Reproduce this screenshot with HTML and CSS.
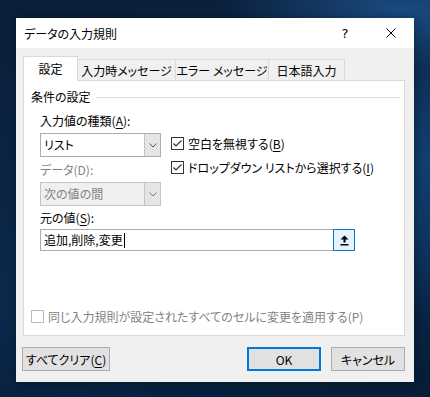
FILE: index.html
```html
<!DOCTYPE html>
<html lang="ja">

<head>
    <meta charset="UTF-8">
    <meta name="viewport" content="width=device-width, initial-scale=1.0">
    <title>データの入力規則</title>
    <link rel="stylesheet" href="styles.css">
</head>

<body>
    <div class="desktop">
        <div class="dialog">
            <div class="titlebar">
                <span class="title">データの入力規則</span>
                <span class="caption-btn">?</span>
                <span class="caption-btn">
                    <svg width="10" height="10" viewBox="0 0 10 10">
                        <path d="M0.5 0.5 L9.5 9.5 M9.5 0.5 L0.5 9.5" stroke="#000" stroke-width="1" fill="none" />
                    </svg>
                </span>
            </div>

            <div class="dialog-body">
                <div class="tabs">
                    <div class="tab active">設定</div>
                    <div class="tab tab-input">入力時メッセージ</div>
                    <div class="tab tab-error">エラー メッセージ</div>
                    <div class="tab tab-ime">日本語入力</div>
                </div>

                <div class="panel">
                    <div class="group-title"><span>条件の設定</span></div>

                    <div class="field-label first">入力値の種類(<u>A</u>):</div>

                    <div class="criteria">
                        <div class="criteria-left">
                            <div class="combo">
                                <span class="combo-text">リスト</span>
                                <span class="combo-btn">
                                    <svg width="8" height="5" viewBox="0 0 8 5">
                                        <path d="M0.5 0.5 L4 4 L7.5 0.5" stroke="#555" stroke-width="1" fill="none" />
                                    </svg>
                                </span>
                            </div>
                            <div class="field-label disabled">データ(D):</div>
                            <div class="combo disabled">
                                <span class="combo-text">次の値の間</span>
                                <span class="combo-btn">
                                    <svg width="8" height="5" viewBox="0 0 8 5">
                                        <path d="M0.5 0.5 L4 4 L7.5 0.5" stroke="#777" stroke-width="1" fill="none" />
                                    </svg>
                                </span>
                            </div>
                        </div>

                        <div class="checks">
                            <div class="check">
                                <span class="box">
                                    <svg width="11" height="11" viewBox="0 0 11 11">
                                        <path d="M1.5 5.5 L4 8 L9.5 2.5" stroke="#333" stroke-width="1.2" fill="none" />
                                    </svg>
                                </span>
                                <span>空白を無視する(<u>B</u>)</span>
                            </div>
                            <div class="check">
                                <span class="box">
                                    <svg width="11" height="11" viewBox="0 0 11 11">
                                        <path d="M1.5 5.5 L4 8 L9.5 2.5" stroke="#333" stroke-width="1.2" fill="none" />
                                    </svg>
                                </span>
                                <span>ドロップダウン リストから選択する(<u>I</u>)</span>
                            </div>
                        </div>
                    </div>

                    <div class="field-label source">元の値(<u>S</u>):</div>
                    <div class="ref-input">
                        <span class="ref-text">追加,削除,変更<span class="caret"></span></span>
                        <span class="ref-btn">
                            <svg width="9" height="11" viewBox="0 0 9 11">
                                <path d="M4.5 0.5 L0.5 4.5 L8.5 4.5 Z" fill="#000" />
                                <rect x="3.5" y="4" width="2" height="3.5" fill="#000" />
                                <rect x="0.5" y="9" width="8" height="1.5" fill="#000" />
                            </svg>
                        </span>
                    </div>

                    <div class="check apply disabled">
                        <span class="box"></span>
                        <span>同じ入力規則が設定されたすべてのセルに変更を適用する(P)</span>
                    </div>
                </div>

                <div class="buttons">
                    <button class="btn btn-clear">すべてクリア(<u>C</u>)</button>
                    <span class="spacer"></span>
                    <button class="btn btn-default">OK</button>
                    <button class="btn">キャンセル</button>
                </div>
            </div>
        </div>
    </div>
</body>

</html>
```

FILE: styles.css
```css
* {
    box-sizing: border-box;
}

body {
    margin: 0;
    font-family: "Noto Sans CJK JP", "Noto Sans", sans-serif;
    font-size: 12px;
    font-feature-settings: "palt";
    color: #000;
}

u {
    text-decoration-thickness: 1px;
    text-underline-offset: 2px;
}

.desktop {
    width: 430px;
    height: 397px;
    padding: 18px 16px 0 16px;
    overflow: hidden;
    background:
        radial-gradient(ellipse 180px 60px at 400px 10px, rgba(40, 110, 185, 0.55), transparent),
        radial-gradient(ellipse 40px 160px at 425px 160px, rgba(20, 80, 140, 0.6), transparent),
        linear-gradient(170deg, #0a1f3b 0%, #0b2646 45%, #0a2a4e 65%, #071c37 100%);
}

.dialog {
    width: 398px;
    height: 364px;
    background: #f0f0f0;
    box-shadow: 0 0 10px rgba(0, 0, 0, 0.35);
    display: flex;
    flex-direction: column;
}

.titlebar {
    height: 30px;
    background: #fff;
    display: flex;
    align-items: center;
}

.title {
    flex: 1;
    padding-left: 8px;
}

.caption-btn {
    width: 46px;
    height: 30px;
    display: flex;
    align-items: center;
    justify-content: center;
    font-family: "DejaVu Sans", sans-serif;
    font-size: 13px;
}

.dialog-body {
    padding: 8px 9px 0 7px;
}

.tabs {
    display: flex;
    align-items: flex-end;
    height: 24px;
    position: relative;
    z-index: 1;
}

.tab {
    height: 21px;
    display: flex;
    align-items: center;
    justify-content: center;
    border: 1px solid #d9d9d9;
    border-left: none;
    border-bottom: none;
    background: #f0f0f0;
}

.tab.active {
    width: 55px;
    height: 25px;
    margin-bottom: -1px;
    border-left: 1px solid #d9d9d9;
    background: #fff;
    padding-bottom: 1px;
}

.tab-input {
    width: 98px;
}

.tab-error {
    width: 93px;
}

.tab-ime {
    width: 76px;
}

.panel {
    width: 382px;
    height: 256px;
    background: #fff;
    border: 1px solid #d9d9d9;
    padding: 8px 0 0 16px;
}

.group-title {
    display: flex;
    align-items: center;
    margin-left: -9px;
    margin-right: 4px;
    height: 16px;
    line-height: 16px;
}

.group-title::after {
    content: "";
    flex: 1;
    height: 1px;
    margin-left: 5px;
    background: #dcdcdc;
}

.field-label {
    height: 16px;
    line-height: 16px;
}

.field-label.first {
    margin-top: 8px;
}

.field-label.disabled {
    color: #838383;
    margin-top: 5px;
}

.field-label.source {
    margin-top: 4px;
}

.criteria {
    display: flex;
    gap: 10px;
    margin-top: 4px;
}

.criteria-left {
    width: 121px;
}

.combo {
    height: 24px;
    border: 1px solid #adadad;
    background: #fff;
    display: flex;
}

.combo.disabled {
    margin-top: 4px;
    background: #f0f0f0;
    border-color: #c4c4c4;
    color: #838383;
}

.combo-text {
    flex: 1;
    padding-left: 3px;
    line-height: 22px;
}

.combo-btn {
    width: 16px;
    background: #e5e5e5;
    border-left: 1px solid #c4c4c4;
    display: flex;
    align-items: center;
    justify-content: center;
}

.checks {
    margin-top: -2px;
}

.check {
    height: 24px;
    display: flex;
    align-items: center;
    gap: 4px;
    white-space: nowrap;
}

.box {
    width: 13px;
    height: 13px;
    border: 1px solid #333;
    background: #fff;
    display: flex;
    align-items: center;
    justify-content: center;
}

.ref-input {
    width: 315px;
    height: 22px;
    margin-top: 3px;
    display: flex;
}

.ref-text {
    flex: 1;
    border: 1px solid #adadad;
    border-right: none;
    padding-left: 3px;
    line-height: 20px;
    display: flex;
    align-items: center;
}

.caret {
    width: 1px;
    height: 15px;
    background: #000;
    margin-left: 1px;
}

.ref-btn {
    width: 22px;
    border: 1px solid #0078d7;
    background: #e5f1fb;
    display: flex;
    align-items: center;
    justify-content: center;
}

.check.apply {
    margin-top: 57px;
    margin-left: -9px;
    height: 16px;
}

.check.disabled {
    color: #838383;
}

.check.disabled .box {
    border-color: #bcbcbc;
}

.buttons {
    display: flex;
    gap: 10px;
    margin-top: 11px;
    margin-left: -1px;
}

.spacer {
    flex: 1;
}

.btn {
    height: 24px;
    width: 74px;
    background: #e1e1e1;
    border: 1px solid #adadad;
    font: inherit;
    color: #000;
    padding: 0;
}

.btn-clear {
    width: 88px;
}

.btn-default {
    border: 2px solid #0078d7;
}
```
